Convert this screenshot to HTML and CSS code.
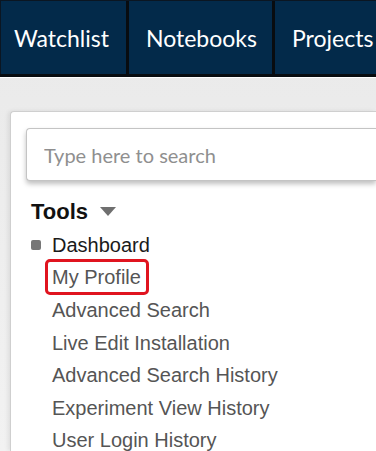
FILE: index.html
```html
<!DOCTYPE html>
<html lang="en">
<head>
    <meta charset="UTF-8">
    <meta name="viewport" content="width=device-width, initial-scale=1.0">
    <title>Tools</title>
    <link rel="stylesheet" href="styles.css">
</head>
<body>
    <nav class="topnav">
        <a class="tab" href="#">Watchlist</a>
        <a class="tab" href="#">Notebooks</a>
        <a class="tab" href="#">Projects</a>
    </nav>

    <div class="page">
        <div class="card">
            <input class="search" type="text" placeholder="Type here to search">

            <h2 class="tools-title">Tools <span class="caret"></span></h2>
            <ul class="tools-list">
                <li class="current">Dashboard</li>
                <li><span class="highlight">My Profile</span></li>
                <li>Advanced Search</li>
                <li>Live Edit Installation</li>
                <li>Advanced Search History</li>
                <li>Experiment View History</li>
                <li>User Login History</li>
            </ul>
        </div>
    </div>
</body>
</html>
```

FILE: styles.css
```css
html, body {
    margin: 0;
    height: 100%;
    overflow: hidden;
}

body {
    display: flex;
    flex-direction: column;
    background: linear-gradient(#e9e9e9, #f2f2f2);
    font-family: "Liberation Sans", Arial, sans-serif;
}

.topnav {
    display: flex;
    flex-shrink: 0;
    height: 73px;
    background-color: #032a4a;
    border-top: 1px solid #0b1622;
    border-bottom: 3px solid #080c10;
    box-shadow: 0 1px 0 #ffffff;
}

.tab {
    display: flex;
    align-items: center;
    padding: 0 15px 0 17px;
    color: #fff;
    text-decoration: none;
    font-family: Lato, "Open Sans", sans-serif;
    font-size: 23px;
    border-right: 3px solid #080c10;
    white-space: nowrap;
}

.tab:first-child {
    padding: 0 17px 0 13px;
    border-left: 1px solid #0b1622;
}

.tab:last-child {
    flex: 1 1 auto;
    min-width: 0;
    padding-right: 0;
    border-right: none;
}

.page {
    flex: 1;
    min-height: 0;
    padding: 34px 0 0 10px;
}

.card {
    box-sizing: border-box;
    height: 100%;
    padding: 16px 0 0 15px;
    background-color: #fff;
    border: 1px solid #cfcfcf;
    border-right: none;
    border-bottom: none;
    border-radius: 4px 0 0 0;
    box-shadow: -2px 0 4px rgba(0, 0, 0, 0.08);
    overflow: hidden;
}

.search {
    display: block;
    box-sizing: border-box;
    width: 100%;
    height: 53px;
    padding: 0 17px;
    border: 1px solid #c4c4c4;
    border-right: none;
    border-radius: 4px 0 0 4px;
    font-family: Lato, "Open Sans", sans-serif;
    font-size: 20px;
    color: #333;
    box-shadow: 0 3px 5px rgba(0, 0, 0, 0.25);
    outline: none;
}

.search::placeholder {
    color: #8f8f8f;
}

.tools-title {
    margin: 17px 0 0 5px;
    font-size: 22px;
    font-weight: bold;
    color: #111;
    line-height: 28px;
}

.caret {
    display: inline-block;
    margin-left: 6px;
    width: 0;
    height: 0;
    border-left: 8px solid transparent;
    border-right: 8px solid transparent;
    border-top: 9px solid #6f6f6f;
    vertical-align: 3px;
}

.tools-list {
    margin: 3px 0 0 0;
    padding: 0 0 0 26px;
    list-style: none;
    font-size: 20px;
    line-height: 32.5px;
    color: #555;
}

.tools-list li {
    white-space: nowrap;
}

.tools-list .current {
    position: relative;
    color: #1a1a1a;
}

.tools-list .current::before {
    content: "";
    position: absolute;
    left: -21px;
    top: 11px;
    width: 10px;
    height: 10px;
    border-radius: 2px;
    background-color: #777;
}

.highlight {
    display: inline-block;
    line-height: 30px;
    padding: 0 5px 0 4px;
    margin-left: -4px;
    outline: 3px solid #e0141f;
    border-radius: 2px;
    vertical-align: 1px;
}
```
